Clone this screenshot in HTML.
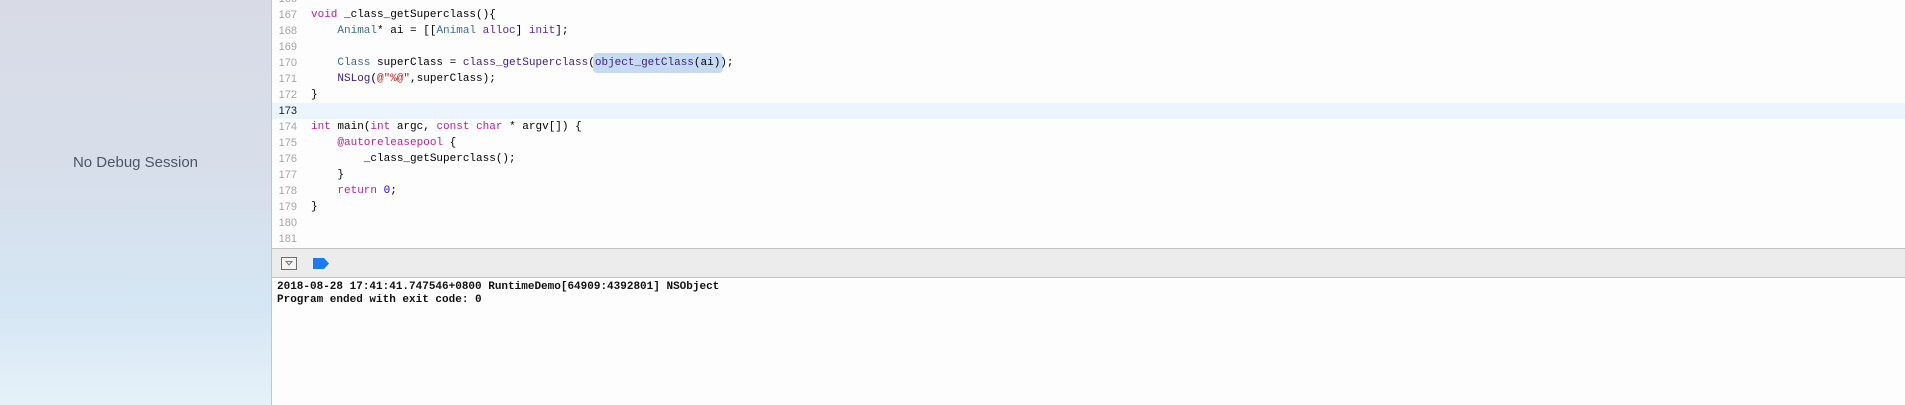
<!DOCTYPE html>
<html><head><meta charset="utf-8"><style>
html,body{margin:0;padding:0;width:1905px;height:405px;overflow:hidden;background:#fdfdfd;position:relative}
#side{position:absolute;left:0;top:0;width:271px;height:405px;background:linear-gradient(180deg,#d8dbe6 0%,#d7dfeb 45%,#d5e6f4 75%,#e6f1f9 100%)}
#side .t{position:absolute;left:0;width:271px;top:154px;text-align:center;font:15px "Liberation Sans",sans-serif;color:#4d5566}
#bord{position:absolute;left:271px;top:0;width:1px;height:405px;background:#c4c4c4}
#ed{position:absolute;left:272px;top:0;right:0;height:248px;background:#fdfdfd;overflow:hidden}
.ln{position:absolute;left:0;width:25px;text-align:right;font:11px "Liberation Sans",sans-serif;color:#a6a6a6;line-height:16px}
.cd{position:absolute;left:39px;font:11px "Liberation Mono",monospace;white-space:pre;color:#000;line-height:16px}
.k{color:#b5219a}.ty{color:#3f6e80}.f{color:#3d1d81}.m{color:#5c2699}.s{color:#c41a16}.n{color:#1c00cf}
#hl{position:absolute;left:0;right:0;top:103px;height:16px;background:#ecf4fd}
#sel{position:absolute;left:321px;top:53px;width:130px;height:20px;background:#c6daf2;border-radius:4px}
#tb{position:absolute;left:272px;top:248px;right:0;height:28px;background:#ececec;border-top:1px solid #c2c2c2;border-bottom:1px solid #c2c2c2}
#con{position:absolute;left:277px;top:281px;font:bold 11px "Liberation Mono",monospace;line-height:13px;white-space:pre;color:#111}
</style></head><body>
<div id="side"><div class="t">No Debug Session</div></div>
<div id="bord"></div>
<div id="ed">
<div id="hl"></div>
<div id="sel"></div>
<div class="ln" style="top:-9px">166</div>
<div class="ln" style="top:7px">167</div><div class="cd" style="top:7px"><span class="k">void</span> _class_getSuperclass(){</div>
<div class="ln" style="top:23px">168</div><div class="cd" style="top:23px">    <span class="ty">Animal</span>* ai = [[<span class="ty">Animal</span> <span class="m">alloc</span>] <span class="m">init</span>];</div>
<div class="ln" style="top:39px">169</div>
<div class="ln" style="top:55px">170</div><div class="cd" style="top:55px">    <span class="ty">Class</span> superClass = <span class="f">class_getSuperclass</span>(<span class="f">object_getClass</span>(ai));</div>
<div class="ln" style="top:71px">171</div><div class="cd" style="top:71px">    <span class="f">NSLog</span>(<span class="s">@"%@"</span>,superClass);</div>
<div class="ln" style="top:87px">172</div><div class="cd" style="top:87px">}</div>
<div class="ln" style="top:103px;color:#222">173</div>
<div class="ln" style="top:119px">174</div><div class="cd" style="top:119px"><span class="k">int</span> main(<span class="k">int</span> argc, <span class="k">const</span> <span class="k">char</span> * argv[]) {</div>
<div class="ln" style="top:135px">175</div><div class="cd" style="top:135px">    <span class="k">@autoreleasepool</span> {</div>
<div class="ln" style="top:151px">176</div><div class="cd" style="top:151px">        _class_getSuperclass();</div>
<div class="ln" style="top:167px">177</div><div class="cd" style="top:167px">    }</div>
<div class="ln" style="top:183px">178</div><div class="cd" style="top:183px">    <span class="k">return</span> <span class="n">0</span>;</div>
<div class="ln" style="top:199px">179</div><div class="cd" style="top:199px">}</div>
<div class="ln" style="top:215px">180</div>
<div class="ln" style="top:231px">181</div>
</div>
<div id="tb">
<svg style="position:absolute;left:9px;top:8px" width="16" height="13" viewBox="0 0 16 13"><rect x="0.5" y="0.5" width="15" height="12" fill="#f4f4f4" stroke="#6e6e6e"/><path d="M5 4.5h6l-3 3.5z" fill="none" stroke="#777" stroke-width="1"/></svg>
<svg style="position:absolute;left:41px;top:9px" width="16" height="11" viewBox="0 0 16 11"><path d="M0 0h11l5 5.5-5 5.5H0z" fill="#1a7cf0"/></svg>
</div>
<div id="con">2018-08-28 17:41:41.747546+0800 RuntimeDemo[64909:4392801] NSObject
Program ended with exit code: 0</div>
</body></html>
